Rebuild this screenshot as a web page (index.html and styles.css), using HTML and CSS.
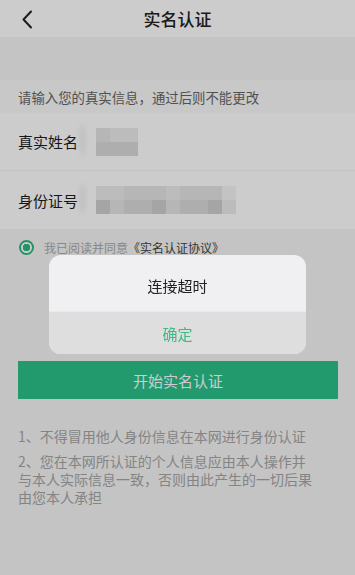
FILE: index.html
```html
<!DOCTYPE html>
<html lang="zh-CN">
<head>
    <meta charset="UTF-8">
    <meta name="viewport" content="width=device-width, initial-scale=1.0">
    <title>实名认证</title>
    <link rel="stylesheet" href="styles.css">
</head>
<body>
    <header class="top-bar">
        <a class="back-btn" href="#">
            <svg width="12" height="19" viewBox="0 0 12 19"><path d="M10 1.5 L2.5 9.5 L10 17.5" fill="none" stroke="#222" stroke-width="2" stroke-linecap="round" stroke-linejoin="round"/></svg>
        </a>
        <h1>实名认证</h1>
        <span></span>
    </header>

    <div class="tip">请输入您的真实信息，通过后则不能更改</div>

    <div class="form">
        <div class="form-row">
            <label>真实姓名</label>
            <div class="masked">
                <div class="px-row">
                    <i class="s2"></i><i class="s1"></i><i class="s1"></i>
                </div>
                <div class="px-row">
                    <i class="s3"></i><i class="s3"></i><i class="s3"></i>
                </div>
            </div>
        </div>
        <div class="form-row">
            <label>身份证号</label>
            <div class="masked">
                <div class="px-row">
                    <i class="s1"></i><i class="s1"></i><i class="s2"></i><i class="s2"></i><i class="s2"></i><i class="s1"></i><i class="s2"></i><i class="s2"></i><i class="s2"></i><i class="s0"></i>
                </div>
                <div class="px-row">
                    <i class="s4"></i><i class="s2"></i><i class="s3"></i><i class="s3"></i><i class="s4"></i><i class="s2"></i><i class="s3"></i><i class="s3"></i><i class="s4"></i><i class="s1"></i>
                </div>
            </div>
        </div>
    </div>

    <div class="agree">
        <span class="radio"></span>
        <span>我已阅读并同意<b>《实名认证协议》</b></span>
    </div>

    <div class="submit-btn">开始实名认证</div>

    <div class="notes">
        <p>1、不得冒用他人身份信息在本网进行身份认证</p>
        <p>2、您在本网所认证的个人信息应由本人操作并与本人实际信息一致，否则由此产生的一切后果由您本人承担</p>
    </div>

    <div class="mask">
        <div class="dialog">
            <div class="dialog-msg">连接超时</div>
            <div class="dialog-btn">确定</div>
        </div>
    </div>
</body>
</html>
```

FILE: styles.css
```css
* {
    box-sizing: border-box;
}

body {
    margin: 0;
    font-family: "Noto Sans CJK SC", "Noto Sans", sans-serif;
    background-color: #f5f5f5;
    color: #222;
}

.top-bar {
    height: 37px;
    background-color: #fff;
    display: grid;
    grid-template-columns: 60px 1fr 60px;
    align-items: center;
}

.back-btn {
    display: flex;
    padding-left: 21px;
    padding-top: 1px;
}

.top-bar h1 {
    margin: 0;
    font-size: 17px;
    font-weight: 500;
    text-align: center;
    line-height: 1;
}

.tip {
    margin-top: 43px;
    height: 33px;
    padding-left: 18px;
    background-color: #fafafa;
    font-size: 13.4px;
    color: #666;
    display: flex;
    align-items: center;
}

.form {
    background-color: #fff;
}

.form-row {
    height: 58px;
    display: flex;
    align-items: center;
    padding-left: 18px;
    border-bottom: 1px solid #f4f4f4;
}

.form-row:last-child {
    border-bottom: none;
}

.form-row label {
    width: 78px;
    font-size: 15px;
    color: #1c1c1c;
    position: relative;
}

.form-row label::after {
    content: "";
    position: absolute;
    right: 10px;
    top: -6px;
    width: 7px;
    height: 30px;
    border-radius: 50%;
    background-color: #f2f2f2;
    filter: blur(2px);
}

.masked {
    display: flex;
    flex-direction: column;
}

.px-row {
    display: flex;
}

.px-row i {
    width: 14px;
    height: 14px;
}

.s0 { background-color: #f4f4f4; }
.s1 { background-color: #ececec; }
.s2 { background-color: #e4e4e4; }
.s3 { background-color: #dadada; }
.s4 { background-color: #cfcfcf; }

.agree {
    margin-top: 8px;
    padding-left: 19px;
    height: 20px;
    display: flex;
    align-items: center;
    gap: 10px;
    font-size: 12px;
    color: #aaa;
}

.agree b {
    font-weight: 400;
    color: #444;
}

.radio {
    width: 15px;
    height: 15px;
    border-radius: 50%;
    border: 2px solid #2cb981;
    background: radial-gradient(circle, #2cb981 0 3.5px, #fff 4px);
}

.submit-btn {
    margin: 104px 17px 0 18px;
    height: 38px;
    background-color: #2bc18a;
    color: #fff;
    font-size: 15px;
    display: flex;
    align-items: center;
    justify-content: center;
}

.notes {
    padding: 28px 40px 0 18px;
    font-size: 14px;
    line-height: 18px;
    color: #a6a6a6;
}

.notes p {
    margin: 0 0 7px;
}

.mask {
    position: fixed;
    inset: 0;
    background-color: rgba(0, 0, 0, 0.2);
    display: flex;
    justify-content: center;
    align-items: flex-start;
    padding-top: 255px;
}

.dialog {
    width: 257px;
    border-radius: 12px;
    overflow: hidden;
    background-color: #f0f0f3;
}

.dialog-msg {
    height: 56px;
    display: flex;
    align-items: center;
    justify-content: center;
    font-size: 15px;
    color: #222;
    padding-top: 4px;
}

.dialog-btn {
    height: 43px;
    border-top: 1px solid #e9e9eb;
    background-color: #dededf;
    display: flex;
    align-items: center;
    justify-content: center;
    font-size: 15px;
    color: #3fb886;
}
```
